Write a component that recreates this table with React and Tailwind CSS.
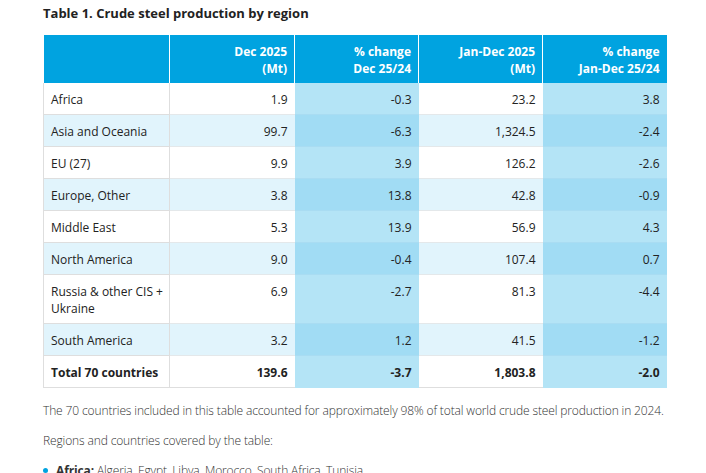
import React from 'react';

const rows = [
  ['Africa', '1.9', '-0.3', '23.2', '3.8'],
  ['Asia and Oceania', '99.7', '-6.3', '1,324.5', '-2.4'],
  ['EU (27)', '9.9', '3.9', '126.2', '-2.6'],
  ['Europe, Other', '3.8', '13.8', '42.8', '-0.9'],
  ['Middle East', '5.3', '13.9', '56.9', '4.3'],
  ['North America', '9.0', '-0.4', '107.4', '0.7'],
  ['Russia & other CIS + Ukraine', '6.9', '-2.7', '81.3', '-4.4'],
  ['South America', '3.2', '1.2', '41.5', '-1.2'],
];

function App() {
  return (
    <div className="w-[706px] h-[473px] overflow-hidden bg-white text-[#222] font-['Open_Sans',sans-serif]">
      <div className="pl-[43px] pr-[40px] pt-[5px]">
        {/* Titre */}
        <h2 className="text-[13px] leading-[17px] font-bold text-[#222]">Table 1. Crude steel production by region</h2>

        {/* Tableau */}
        <table className="mt-[13px] w-[623px] table-fixed border-collapse text-[12px] leading-[17px]">
          <colgroup>
            <col className="w-[126px]" />
            <col className="w-[125px]" />
            <col className="w-[124px]" />
            <col className="w-[124px]" />
            <col className="w-[124px]" />
          </colgroup>
          <thead>
            <tr className="bg-[#00a3e0] text-white font-bold text-right">
              <th className="h-[48px] px-[7px] pt-[8px] pb-[6px] border-r border-white"></th>
              <th className="px-[7px] pt-[8px] pb-[6px] border-r border-white align-top font-bold">Dec 2025<br />(Mt)</th>
              <th className="px-[7px] pt-[8px] pb-[6px] border-r border-white align-top font-bold">% change<br />Dec 25/24</th>
              <th className="px-[7px] pt-[8px] pb-[6px] border-r border-white align-top font-bold">Jan-Dec 2025<br />(Mt)</th>
              <th className="px-[7px] pt-[8px] pb-[6px] align-top font-bold">% change<br />Jan-Dec 25/24</th>
            </tr>
          </thead>
          <tbody>
            {rows.map((r, i) => {
              const odd = i % 2 === 1;
              const light = odd ? 'bg-[#e1f4fc]' : 'bg-white';
              const blue = odd ? 'bg-[#a1dcf4]' : 'bg-[#b4e4f6]';
              return (
                <tr key={r[0]}>
                  <td className={`${light} pl-[7px] pr-[2px] pt-[8px] pb-[6px] align-top border-l border-b border-r border-[#dedede]`}>{r[0]}</td>
                  <td className={`${light} px-[7px] pt-[8px] pb-[6px] align-top text-right border-b border-[#e4e8ea]`}>{r[1]}</td>
                  <td className={`${blue} px-[7px] pt-[8px] pb-[6px] align-top text-right border-b border-[#a9dcf2]`}>{r[2]}</td>
                  <td className={`${light} px-[7px] pt-[8px] pb-[6px] align-top text-right border-b border-[#e4e8ea]`}>{r[3]}</td>
                  <td className={`${blue} px-[7px] pt-[8px] pb-[6px] align-top text-right border-b border-[#a9dcf2]`}>{r[4]}</td>
                </tr>
              );
            })}
            <tr className="font-bold">
              <td className="bg-white pl-[7px] pr-[2px] pt-[8px] pb-[6px] border-l border-b border-r border-[#dedede]">Total 70 countries</td>
              <td className="bg-white px-[7px] pt-[8px] pb-[6px] text-right border-b border-[#dedede]">139.6</td>
              <td className="bg-[#b4e4f6] px-[7px] pt-[8px] pb-[6px] text-right border-b border-[#b4e4f6]">-3.7</td>
              <td className="bg-white px-[7px] pt-[8px] pb-[6px] text-right border-b border-[#dedede]">1,803.8</td>
              <td className="bg-[#b4e4f6] px-[7px] pt-[8px] pb-[6px] text-right border-b border-[#b4e4f6]">-2.0</td>
            </tr>
          </tbody>
        </table>

        {/* Notes */}
        <p className="mt-[14px] text-[12px] leading-[17px] font-light text-[#333] tracking-[-0.13px]">
          The 70 countries included in this table accounted for approximately 98% of total world crude steel production in 2024.
        </p>
        <p className="mt-[13px] text-[12px] leading-[17px] font-light text-[#333] tracking-[-0.13px]">
          Regions and countries covered by the table:
        </p>
        <ul className="mt-[13px] text-[12px] leading-[17px] font-light text-[#333] tracking-[-0.13px]">
          <li className="flex items-center gap-[8px]">
            <span className="w-[5px] h-[5px] rounded-full bg-[#00a3e0]"></span>
            <span><b className="font-bold">Africa:</b> Algeria, Egypt, Libya, Morocco, South Africa, Tunisia</span>
          </li>
        </ul>
      </div>
    </div>
  );
}

export default App;
